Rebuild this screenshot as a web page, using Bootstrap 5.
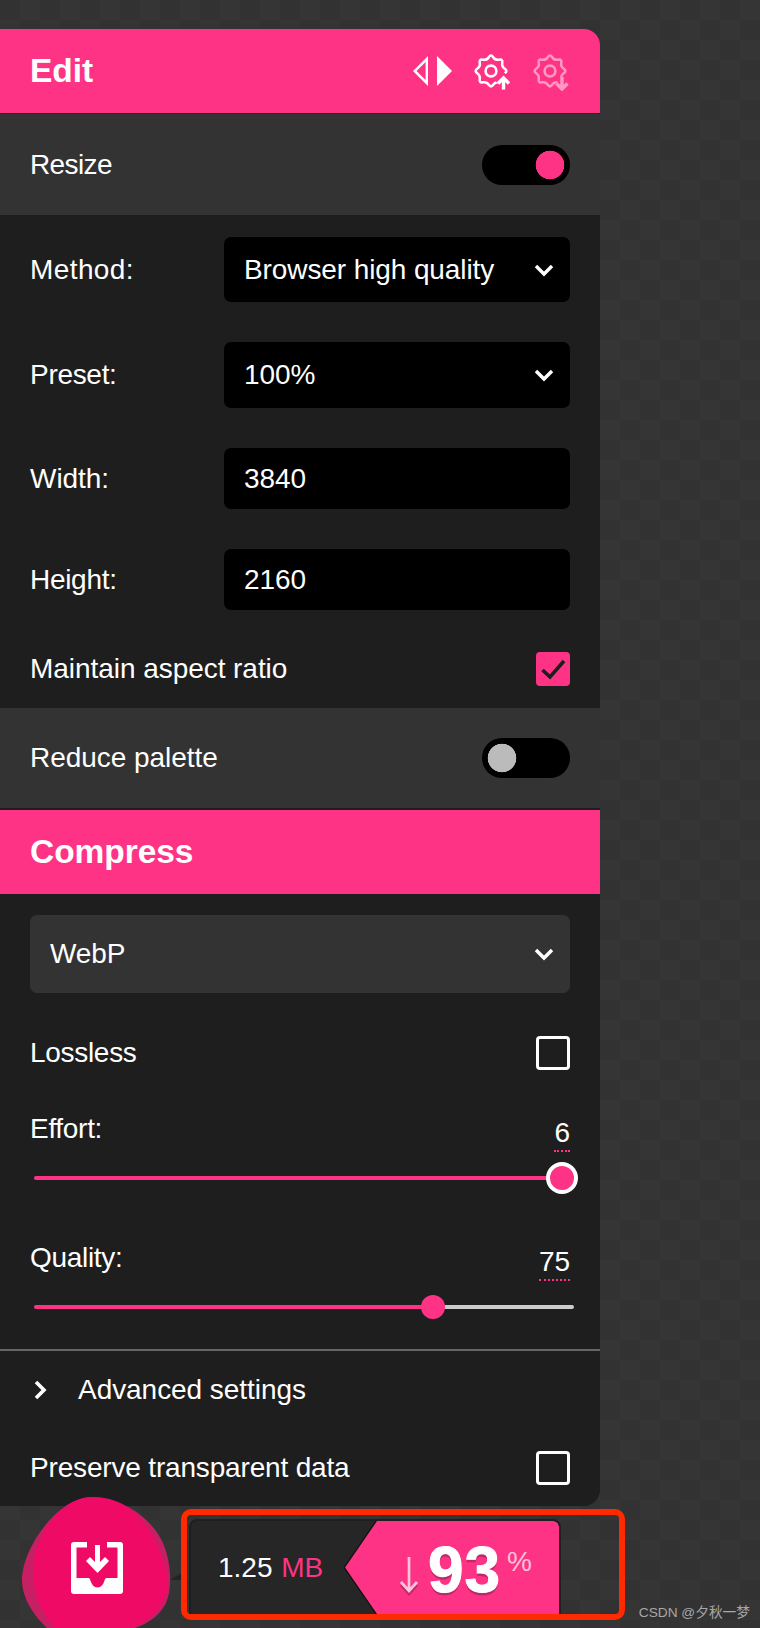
<!DOCTYPE html>
<html lang="en">
<head>
<meta charset="utf-8">
<title>Edit</title>
<link href="https://cdn.jsdelivr.net/npm/bootstrap@5.3.0/dist/css/bootstrap.min.css" rel="stylesheet">
<style>
:root{--pink:#ff3385;--panel:#1e1e1e;--mid:#333;}
html,body{height:100%;}
body{width:760px;height:1628px;overflow:hidden;background-color:#333;background-image:conic-gradient(#353535 25%,#323232 0 50%,#353535 0 75%,#323232 0);background-size:40px 40px;color:#fff;font-family:"Liberation Sans",Arial,sans-serif;font-size:28px;line-height:34px;letter-spacing:-.05px;position:relative;}
.side{width:600px;margin-top:29px;background:var(--panel);border-radius:0 16px 16px 0;}
.bar-pink{height:84px;background:var(--pink);padding:0 30px;font-size:33.5px;font-weight:700;}
.bar-edit{border-radius:0 16px 0 0;}
.bar-line{height:1px;background:#1e1e1e;}
.bar-line-2{height:2px;}
.bar-mid{background:var(--mid);padding:0 30px;}
.h-resize{height:101px;}
.h-reduce{height:100px;}
.sect{padding:22px 30px 22px;}
.sect-tight{padding-top:21px;padding-bottom:0;}
.gear-gap{gap:19px;}
.dim{opacity:.5;}
.pick.form-select,.entry.form-control{background-color:#000;color:#fff;border:0;border-radius:7px;font-size:28px;line-height:34px;letter-spacing:-.1px;padding:0 50px 0 20px;box-shadow:none;}
.entry.form-control{padding-right:21px;}
.pick.form-select{background-image:url("data:image/svg+xml,%3csvg xmlns='http://www.w3.org/2000/svg' viewBox='0 0 20 14'%3e%3cpath fill='none' stroke='%23fff' stroke-width='3.4' d='M2 3l8 8 8-8'/%3e%3c/svg%3e");background-size:20px 14px;background-position:right 16px center;}
.pick-wide.form-select{background-color:var(--mid);height:78px;}
.field-label{width:194px;flex:none;}
.h65{height:65px;}.h66{height:66px;}.h61{height:61px;}
.gap40{margin-top:40px;}
.gap42{margin-top:42px;}
.ls-tight{letter-spacing:-.6px;}
.ls-mid{letter-spacing:-.3px;}
.ls-soft{letter-spacing:-.17px;}
.ls-wide{letter-spacing:.4px;}
.tick.form-check-input{width:34px;height:34px;margin:0;flex:none;background-color:transparent;border:3.5px solid #fff;border-radius:4px;box-shadow:none;}
.tick.form-check-input:checked{background-color:var(--pink);border:0;background-size:28px 28px;background-position:center;background-image:url("data:image/svg+xml,%3csvg xmlns='http://www.w3.org/2000/svg' viewBox='0 0 28 28'%3e%3cpath fill='none' stroke='%231e1e1e' stroke-width='3.6' d='M3.5 15l7.5 7L25 6'/%3e%3c/svg%3e");}
.flip.form-check-input{width:88px;height:40px;margin:0;flex:none;border:0;border-radius:20px;box-shadow:none;background-color:#000;background-size:auto;background-position:0 0;background-image:radial-gradient(circle at 20px 20px,#bbb 14px,#000 14.6px);}
.flip.form-check-input:checked{background-color:#000;background-image:radial-gradient(circle at 68px 20px,var(--pink) 14px,#000 14.6px);}
.val{border-bottom:2px dotted var(--pink);margin-top:4px;line-height:34px;}
.gap43{margin-top:43px;}
.top-gap-a{margin-top:42px;}
.top-gap-b{margin-top:47px;}
.rng.form-range{display:block;height:32px;margin:10px 0 0 4px;width:540px;padding:0;}
.rng-ring.form-range{width:544px;}
.rng.form-range:focus{box-shadow:none;}
.rng.form-range::-webkit-slider-runnable-track{height:4px;border-radius:2px;background:linear-gradient(90deg,var(--pink) var(--fill),#ccc var(--fill));}
.rng.form-range::-webkit-slider-thumb{-webkit-appearance:none;width:24px;height:24px;margin-top:-10px;border-radius:50%;background:var(--pink);border:0;box-shadow:none;}
.rng-ring.form-range::-webkit-slider-thumb{width:32px;height:32px;margin-top:-14px;border:4px solid #fff;}
.rule{border-top:2px solid #666;margin-top:26px;padding:22px 30px 21px;}
.adv-gap{gap:29px;padding-left:3px;}
.mt44{margin-top:44px;}
.chev{width:16px;height:20px;}
.foot{height:122px;padding-left:181px;padding-top:3px;position:relative;}
.blob{position:absolute;left:21px;top:-9px;width:170px;height:131px;}
.mark-box{width:444px;height:111px;border:6px solid #ff2a00;border-radius:10px;padding:4px 58px 0 2px;position:relative;}
.res{height:95px;background:#262626;border:2px solid #1f1f1f;border-bottom:0;border-radius:8px 8px 0 0;position:relative;overflow:hidden;}
.res::before{content:"";position:absolute;left:152.5px;right:0;top:0;bottom:0;background:#111;clip-path:polygon(32px 0,100% 0,100% 100%,32px 100%,0 50%);}
.res-size{padding-left:27px;font-size:28px;letter-spacing:0;width:150px;flex:none;white-space:nowrap;position:relative;}
.res-size span{color:var(--pink);margin-left:1px;}
.res-gain{position:absolute;left:154px;right:0;top:0;bottom:0;background:var(--pink);clip-path:polygon(32px 0,calc(100% - 5px) 0,calc(100% - 1.500px) 1.500px,100% 5px,100% 100%,32px 100%,0 50%);}
.arrow-d{position:absolute;left:54px;top:36px;}
.pct-big{position:absolute;left:83px;top:11px;font-size:64px;line-height:76px;font-weight:700;letter-spacing:1px;-webkit-text-stroke:1px #fff;text-shadow:0 3px 0 #bd2a69;}
.pct-sign{position:absolute;left:162px;top:26px;font-size:28px;line-height:30px;color:#ffc2da;}
.wm{position:absolute;right:10px;bottom:6px;font-size:13.7px;line-height:18px;letter-spacing:0;color:#a8a8a8;font-family:"Liberation Sans","Noto Sans CJK SC",sans-serif;}
</style>
</head>
<body>
<div class="side">
  <div class="bar-pink bar-edit d-flex align-items-center justify-content-between">
    <div>Edit</div>
    <div class="d-flex gear-gap">
      <svg width="40" height="40" viewBox="0 0 40 40"><path d="M16 5v30L1 20z M13.6 11 4.500 20l9.100 9z" fill="#fff" fill-rule="evenodd"/><path d="M25 5v30l15-15z" fill="#fff"/></svg>
      <svg width="40" height="40" viewBox="0 0 40 40" fill="none" stroke="#fff"><path stroke-width="2.500" d="M33.77 17.82Q37 20 33.77 22.18T31.28 28.19T28.19 31.28T22.18 33.77T17.82 33.77T11.81 31.28T8.72 28.19T6.23 22.18T6.23 17.82T8.72 11.81T11.81 8.72T17.82 6.23T22.18 6.23T28.19 8.72T31.28 11.81T33.77 17.82Z"/><circle cx="20" cy="20" r="5.400" stroke-width="2.600"/><path stroke="#ff3385" stroke-width="9" d="M32.500 38V27M27 32.500l5.500-5.500 5.500 5.500"/><path stroke-width="3.400" d="M32.500 38.500V27M27 32.500l5.500-5.500 5.500 5.500"/></svg>
      <svg class="dim" width="40" height="40" viewBox="0 0 40 40" fill="none" stroke="#fff"><path stroke-width="2.500" d="M33.77 17.82Q37 20 33.77 22.18T31.28 28.19T28.19 31.28T22.18 33.77T17.82 33.77T11.81 31.28T8.72 28.19T6.23 22.18T6.23 17.82T8.72 11.81T11.81 8.72T17.82 6.23T22.18 6.23T28.19 8.72T31.28 11.81T33.77 17.82Z"/><circle cx="20" cy="20" r="5.400" stroke-width="2.600"/><path stroke="#ff3385" stroke-width="9" d="M32 26v12M26.500 32.500l5.500 5.500 5.500-5.500"/><path stroke-width="3.400" d="M32 26v12M26.500 32.500l5.500 5.500 5.500-5.500"/></svg>
    </div>
  </div>
  <div class="bar-line"></div>
  <div class="bar-mid h-resize d-flex align-items-center justify-content-between">
    <div class="ls-tight">Resize</div>
    <input class="form-check-input flip" type="checkbox" role="switch" checked aria-label="Resize">
  </div>
  <div class="sect">
    <div class="d-flex align-items-center h65">
      <div class="field-label ls-wide">Method:</div>
      <select class="form-select pick h-100" aria-label="Method"><option>Browser high quality</option></select>
    </div>
    <div class="d-flex align-items-center h66 gap40">
      <div class="field-label ls-mid">Preset:</div>
      <select class="form-select pick h-100" aria-label="Preset"><option>100%</option></select>
    </div>
    <div class="d-flex align-items-center h61 gap40">
      <div class="field-label">Width:</div>
      <input class="form-control entry h-100" value="3840" aria-label="Width">
    </div>
    <div class="d-flex align-items-center h61 gap40">
      <div class="field-label ls-mid">Height:</div>
      <input class="form-control entry h-100" value="2160" aria-label="Height">
    </div>
    <div class="d-flex align-items-center justify-content-between gap42">
      <div>Maintain aspect ratio</div>
      <input class="form-check-input tick" type="checkbox" checked aria-label="Maintain aspect ratio">
    </div>
  </div>
  <div class="bar-mid h-reduce d-flex align-items-center justify-content-between">
    <div>Reduce palette</div>
    <input class="form-check-input flip" type="checkbox" role="switch" aria-label="Reduce palette">
  </div>
  <div class="bar-line bar-line-2"></div>
  <div class="bar-pink d-flex align-items-center">Compress</div>
  <div>
    <div class="sect sect-tight">
      <select class="form-select pick pick-wide" aria-label="Format"><option>WebP</option></select>
      <div class="d-flex align-items-center justify-content-between gap43">
        <div class="ls-mid">Lossless</div>
        <input class="form-check-input tick" type="checkbox" aria-label="Lossless">
      </div>
      <div class="d-flex align-items-start justify-content-between top-gap-a">
        <div class="ls-mid">Effort:</div>
        <div class="val">6</div>
      </div>
      <input type="range" class="form-range rng rng-ring" min="0" max="6" value="6" style="--fill:100%" aria-label="Effort">
      <div class="d-flex align-items-start justify-content-between top-gap-b">
        <div class="ls-mid">Quality:</div>
        <div class="val">75</div>
      </div>
      <input type="range" class="form-range rng" min="0" max="100" value="75" style="--fill:74.8%" aria-label="Quality">
    </div>
    <div class="rule">
      <div class="d-flex align-items-center adv-gap">
        <svg class="chev" viewBox="0 0 16 20"><path d="M3 2l8 8-8 8" fill="none" stroke="#fff" stroke-width="3.600"/></svg>
        <div>Advanced settings</div>
      </div>
      <div class="d-flex align-items-center justify-content-between mt44">
        <div class="ls-soft">Preserve transparent data</div>
        <input class="form-check-input tick" type="checkbox" aria-label="Preserve transparent data">
      </div>
    </div>
  </div>
</div>
<div class="foot">
  <svg class="blob" viewBox="0 0 170 131">
    <path d="M149 83 166 73v10z" fill="#232323"/>
    <path d="M72 0C106 2 132 24 142 46C151 68 151 92 145 106C139 118 128 126 114 131H26C12 118 0 100 1 80C3 50 36 0 72 0Z" fill="#c71f63"/>
    <path d="M72 0C104 0 126 22 138 52C148 76 150 92 140 108C132 120 122 126 110 131H34C18 112 11 95 12 70C14 40 38 0 72 0Z" fill="#ef0a66"/>
    <path fill="#fff" fill-rule="evenodd" d="M53 45h13v5.500H55.500V81h11c3 0 2.500 2 3.500 4c1 2.500 3 5.500 6.500 5.500s5.500-3 6.500-5.500c1-2 .5-4 3.500-4h10V50.500H86V45h13c2 0 3 1 3 3v46c0 2-1 3-3 3H53c-2 0-3-1-3-3V48c0-2 1-3 3-3Z"/>
    <path fill="#fff" d="M74 48h5v17l5-5 4 4-11.500 12-11.500-12 4-4 5 5z"/>
  </svg>
  <div class="mark-box">
    <div class="res d-flex align-items-center">
      <div class="res-size">1.25 <span>MB</span></div>
      <div class="res-gain">
        <svg class="arrow-d" width="20" height="42" viewBox="0 0 20 42" fill="none"><path d="M10 0v33M2 25l8 9 8-9" stroke="#c42a68" stroke-width="2.800" transform="translate(0 3)"/><path d="M10 0v33M2 25l8 9 8-9" stroke="#ffc4db" stroke-width="2.800"/></svg>
        <div class="pct-big">93</div>
        <div class="pct-sign">%</div>
      </div>
    </div>
  </div>
  <div class="wm">CSDN @夕秋一梦</div>
</div>
<script src="https://cdn.jsdelivr.net/npm/bootstrap@5.3.0/dist/js/bootstrap.bundle.min.js"></script>
</body>
</html>
